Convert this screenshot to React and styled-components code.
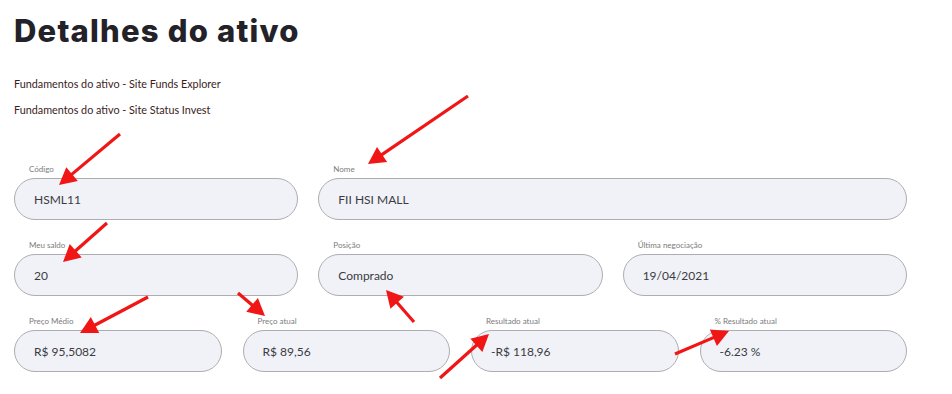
import React from 'react'
import styled, { createGlobalStyle } from 'styled-components'

const GlobalStyle = createGlobalStyle`
  html, body {
    margin: 0;
    padding: 0;
    background: #ffffff;
  }
  body {
    font-family: Lato, "Noto Sans", sans-serif;
  }
`

const Page = styled.main`
  position: relative;
  width: 893px;
  padding: 11px 14px 20px;
`

const Title = styled.h1`
  margin: 0;
  font-family: Inter, "Noto Sans", sans-serif;
  font-weight: 800;
  font-size: 31px;
  line-height: 40px;
  letter-spacing: 1.2px;
  color: #232228;
`

const Links = styled.nav`
  display: flex;
  flex-direction: column;
  gap: 12px;
  margin-top: 26px;
`

const SourceLink = styled.a`
  font-size: 10.8px;
  line-height: 14px;
  color: #3a1c1c;
  text-decoration: none;
`

const Form = styled.section`
  display: flex;
  flex-direction: column;
  gap: 20px;
  margin-top: 47px;
`

const Row = styled.div`
  display: grid;
  grid-template-columns: ${p => p.$cols};
  column-gap: ${p => p.$gap || 20}px;
`

const Field = styled.label`
  display: flex;
  flex-direction: column;
  grid-column: span ${p => p.$span || 1};
`

const Label = styled.span`
  padding-left: 15px;
  font-size: 8px;
  line-height: 10px;
  height: 14px;
  color: #7b7b7b;
`

const Value = styled.div`
  box-sizing: border-box;
  height: 42px;
  display: flex;
  align-items: center;
  padding: 0 19px;
  border: 1px solid #aeaeb2;
  border-radius: 21px;
  background: #f1f2f7;
  font-size: 12px;
  color: #3a3b42;
`

const Overlay = styled.svg`
  position: absolute;
  left: 0;
  top: 0;
  width: 952px;
  height: 394px;
  pointer-events: none;
`

const arrows = [
  [120, 134, 59, 185],
  [468, 96, 368, 164],
  [107, 223, 63, 262],
  [148, 297, 80, 333],
  [238, 293, 265, 316],
  [414, 322, 386, 290],
  [440, 378, 489, 334],
  [675, 354, 729, 331],
]

const Arrow = ({ x1, y1, x2, y2 }) => {
  const dx = x2 - x1
  const dy = y2 - y1
  const len = Math.hypot(dx, dy)
  const ux = dx / len
  const uy = dy / len
  const headLen = 17
  const headW = 9
  const bx = x2 - ux * headLen
  const by = y2 - uy * headLen
  const pts = [
    `${x2},${y2}`,
    `${bx - uy * headW},${by + ux * headW}`,
    `${bx + uy * headW},${by - ux * headW}`,
  ].join(' ')
  return (
    <g>
      <line x1={x1} y1={y1} x2={bx + ux * 2} y2={by + uy * 2} stroke="#f01616" strokeWidth="3.2" />
      <polygon points={pts} fill="#f01616" />
    </g>
  )
}

const rows = [
  {
    cols: 'repeat(3, 1fr)',
    gap: 20,
    fields: [
      { label: 'Código', value: 'HSML11' },
      { label: 'Nome', value: 'FII HSI MALL', span: 2 },
    ],
  },
  {
    cols: 'repeat(3, 1fr)',
    gap: 20,
    fields: [
      { label: 'Meu saldo', value: '20' },
      { label: 'Posição', value: 'Comprado' },
      { label: 'Última negociação', value: '19/04/2021' },
    ],
  },
  {
    cols: 'repeat(4, 1fr)',
    gap: 21,
    fields: [
      { label: 'Preço Médio', value: 'R$ 95,5082' },
      { label: 'Preço atual', value: 'R$ 89,56' },
      { label: 'Resultado atual', value: '-R$ 118,96' },
      { label: '% Resultado atual', value: '-6.23 %' },
    ],
  },
]

const App = () => (
  <>
    <GlobalStyle />
    <Page>
      <Title>Detalhes do ativo</Title>
      <Links>
        <SourceLink href="#">Fundamentos do ativo - Site Funds Explorer</SourceLink>
        <SourceLink href="#">Fundamentos do ativo - Site Status Invest</SourceLink>
      </Links>
      <Form>
        {rows.map((row, i) => (
          <Row key={i} $cols={row.cols} $gap={row.gap}>
            {row.fields.map(f => (
              <Field key={f.label} $span={f.span}>
                <Label>{f.label}</Label>
                <Value>{f.value}</Value>
              </Field>
            ))}
          </Row>
        ))}
      </Form>
      <Overlay viewBox="0 0 952 394">
        {arrows.map(([x1, y1, x2, y2], i) => (
          <Arrow key={i} x1={x1} y1={y1} x2={x2} y2={y2} />
        ))}
      </Overlay>
    </Page>
  </>
)

export default App
